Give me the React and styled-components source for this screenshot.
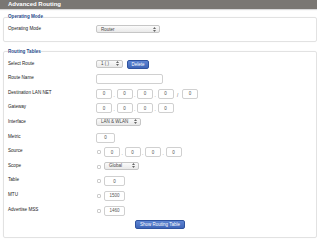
import styled, { createGlobalStyle } from "styled-components"

const GlobalStyle = createGlobalStyle`
  html, body {
    margin: 0;
    padding: 0;
    background: #fff;
  }
  body {
    font-family: "Liberation Sans", Arial, sans-serif;
  }
`

const Page = styled.div`
  width: 317px;
  height: 240px;
  overflow: hidden;
`

const Header = styled.div`
  height: 9px;
  padding-left: 8px;
  background: #7a7773;
  color: #fff;
  font-size: 6px;
  font-weight: bold;
  line-height: 9px;
  box-shadow: 0 1px 1px rgba(0, 0, 0, 0.15);
`

const Section = styled.fieldset`
  margin: ${p => p.$top}px 0 0 3px;
  padding: 0 4px ${p => p.$bottom}px 4px;
  border: 1px solid #e2e2e2;
  border-radius: 2px;
  box-shadow: 0 0 1px rgba(0, 0, 0, 0.08);
  min-width: 0;
`

const Legend = styled.legend`
  padding: 0;
  margin-bottom: 4px;
  font-size: 4.6px;
  font-weight: bold;
  line-height: 8px;
  color: #2a4a8a;
`

const Row = styled.div`
  display: flex;
  align-items: flex-start;
  justify-content: ${p => (p.$center ? "center" : "flex-start")};
  height: 10px;
  margin-bottom: 4.6px;
`

const Label = styled.div`
  flex: none;
  width: 88px;
  font-size: 4.6px;
  line-height: 8px;
  color: #222;
`

const Controls = styled.div`
  display: flex;
  align-items: center;
  height: 10px;
`

const Select = styled.div`
  box-sizing: border-box;
  display: flex;
  align-items: center;
  justify-content: space-between;
  width: ${p => p.$w}px;
  height: 8px;
  padding: 0 3px 0 4px;
  border: 1px solid #c6c6c6;
  border-radius: 2px;
  background: linear-gradient(#fbfbfb, #e9e9e9);
  font-size: 4.5px;
  color: #444;
  align-self: flex-start;
`

const Input = styled.input`
  box-sizing: border-box;
  width: ${p => p.$w}px;
  height: 10px;
  margin: 0;
  padding: 0;
  border: 1px solid #d0d0d0;
  border-radius: 2px;
  background: #fff;
  font-family: inherit;
  font-size: 4.5px;
  color: #555;
  text-align: center;
  outline: none;
`

const Sep = styled.span`
  width: ${p => p.$w}px;
  align-self: flex-end;
  text-align: center;
  font-size: 4.5px;
  line-height: 6px;
  color: #666;
`

const Check = styled.span`
  box-sizing: border-box;
  width: 4px;
  height: 4px;
  margin: 0 3px 0 1px;
  border: 1px solid #cccccc;
  border-radius: 1px;
  background: #fff;
`

const Button = styled.button`
  height: 9px;
  margin: ${p => (p.$gap ? "0 0 0 4px" : "0")};
  padding: 0 ${p => p.$pad}px;
  border: 1px solid #2f539f;
  border-radius: 2px;
  background: linear-gradient(#5d84d2, #3f66b8);
  font-family: inherit;
  font-size: 4.5px;
  line-height: 7px;
  color: #fff;
  align-self: flex-start;
`

const Arrows = () => (
  <svg width="3" height="5" viewBox="0 0 6 10">
    <path d="M3 0 L6 4 L0 4 Z M3 10 L0 6 L6 6 Z" fill="#666" />
  </svg>
)

const Ip = ({ w = 16, sep = 4.5, mask }) => (
  <>
    <Input $w={w} readOnly value="0" />
    <Sep $w={sep}>.</Sep>
    <Input $w={w} readOnly value="0" />
    <Sep $w={sep}>.</Sep>
    <Input $w={w} readOnly value="0" />
    <Sep $w={sep}>.</Sep>
    <Input $w={w} readOnly value="0" />
    {mask && (
      <>
        <Sep $w={8.5}>/</Sep>
        <Input $w={16} readOnly value="0" />
      </>
    )}
  </>
)

export default function App() {
  return (
    <Page>
      <GlobalStyle />
      <Header>Advanced Routing</Header>

      <Section $top={4} $bottom={1}>
        <Legend>Operating Mode</Legend>
        <Row>
          <Label>Operating Mode</Label>
          <Select $w={64}>
            Router <Arrows />
          </Select>
        </Row>
      </Section>

      <Section $top={6} $bottom={2}>
        <Legend>Routing Tables</Legend>
        <Row>
          <Label>Select Route</Label>
          <Controls>
            <Select $w={27}>
              1 ( ) <Arrows />
            </Select>
            <Button $gap $pad={3.5}>Delete</Button>
          </Controls>
        </Row>
        <Row>
          <Label>Route Name</Label>
          <Input $w={67} readOnly value="" />
        </Row>
        <Row>
          <Label>Destination LAN NET</Label>
          <Controls>
            <Ip mask />
          </Controls>
        </Row>
        <Row>
          <Label>Gateway</Label>
          <Controls>
            <Ip />
          </Controls>
        </Row>
        <Row>
          <Label>Interface</Label>
          <Select $w={45}>
            LAN &amp; WLAN <Arrows />
          </Select>
        </Row>
        <Row>
          <Label>Metric</Label>
          <Input $w={19} readOnly value="0" />
        </Row>
        <Row>
          <Label>Source</Label>
          <Controls>
            <Check />
            <Ip />
          </Controls>
        </Row>
        <Row>
          <Label>Scope</Label>
          <Controls>
            <Check />
            <Select $w={35}>
              Global <Arrows />
            </Select>
          </Controls>
        </Row>
        <Row>
          <Label>Table</Label>
          <Controls>
            <Check />
            <Input $w={21} readOnly value="0" />
          </Controls>
        </Row>
        <Row>
          <Label>MTU</Label>
          <Controls>
            <Check />
            <Input $w={21} readOnly value="1500" />
          </Controls>
        </Row>
        <Row>
          <Label>Advertise MSS</Label>
          <Controls>
            <Check />
            <Input $w={21} readOnly value="1460" />
          </Controls>
        </Row>
        <Row $center>
          <Button $pad={4.5}>Show Routing Table</Button>
        </Row>
      </Section>
    </Page>
  )
}
